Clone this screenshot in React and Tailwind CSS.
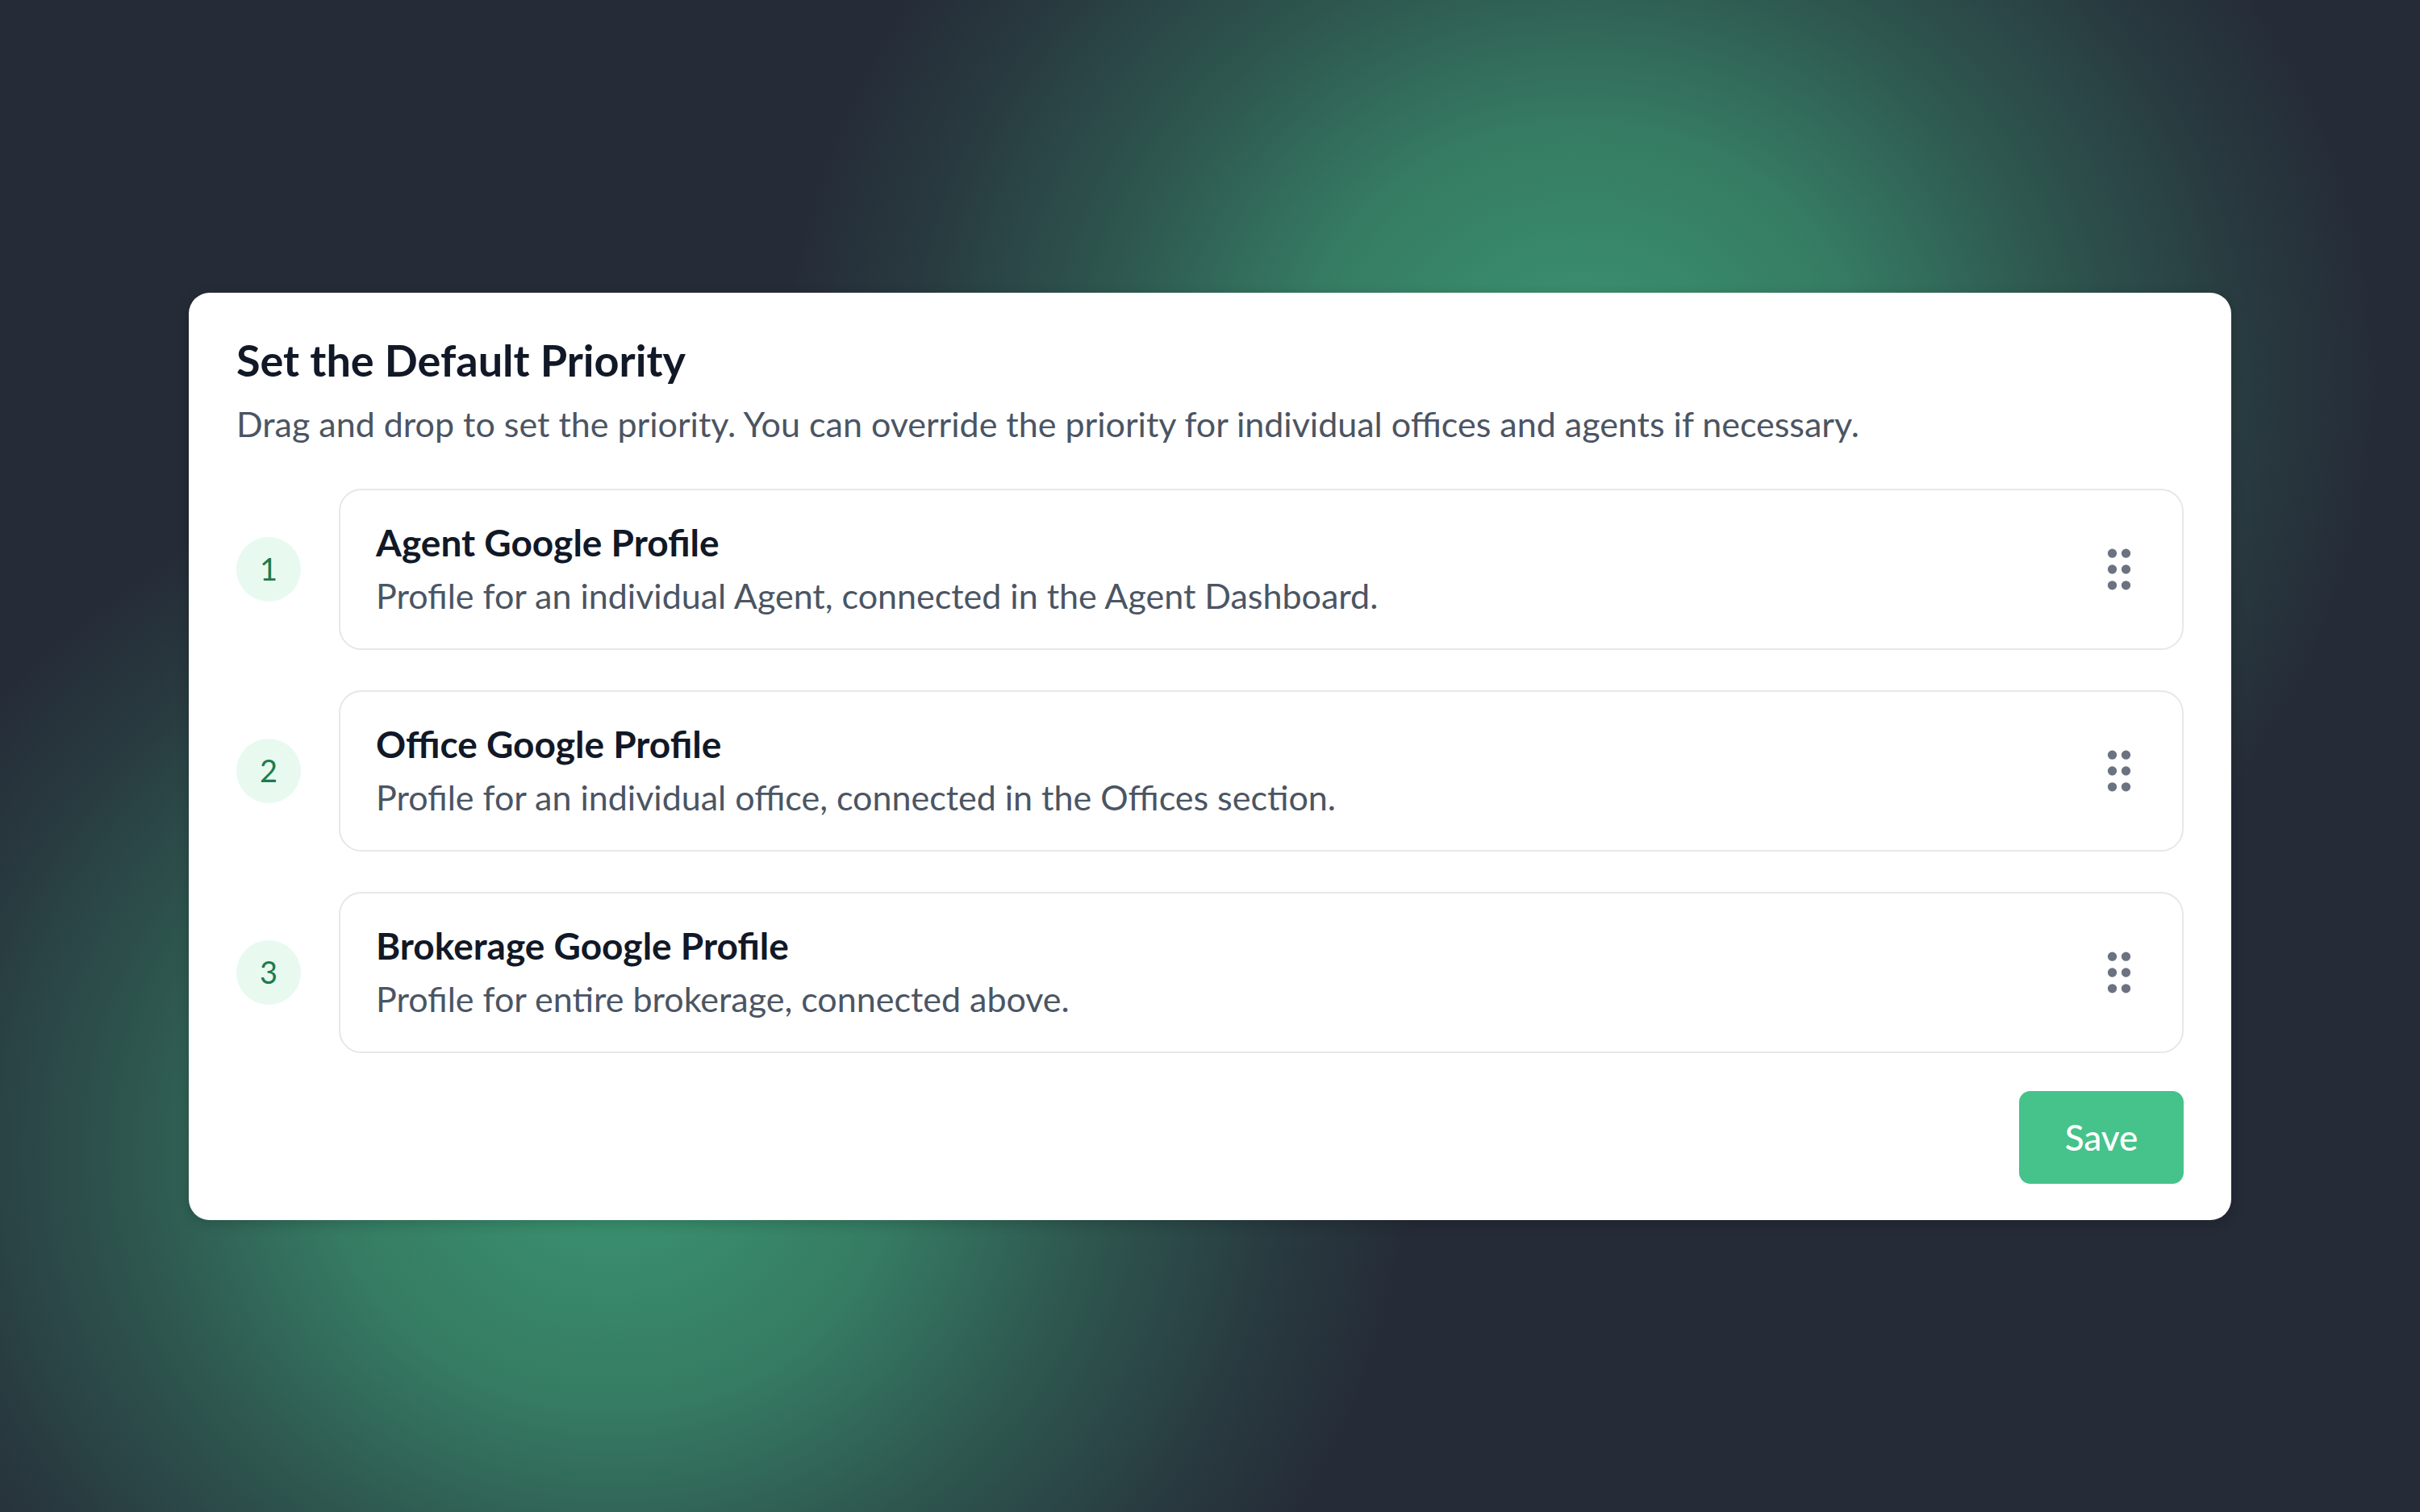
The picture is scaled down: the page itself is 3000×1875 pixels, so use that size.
import { GripVertical } from 'lucide-react'

const profiles = [
  { id: 1, title: 'Agent Google Profile', description: 'Profile for an individual Agent, connected in the Agent Dashboard.' },
  { id: 2, title: 'Office Google Profile', description: 'Profile for an individual office, connected in the Offices section.' },
  { id: 3, title: 'Brokerage Google Profile', description: 'Profile for entire brokerage, connected above.' },
]

export default function App() {
  return (
    <div className="min-h-screen w-full flex items-center justify-center bg-[#252b37] bg-[radial-gradient(ellipse_1000px_900px_at_1960px_470px,rgba(59,150,114,1)_0%,rgba(59,150,114,0.75)_35%,rgba(59,150,114,0.4)_60%,rgba(59,150,114,0.12)_85%,rgba(59,150,114,0)_100%),radial-gradient(ellipse_1000px_900px_at_760px_1430px,rgba(59,150,114,1)_0%,rgba(59,150,114,0.75)_35%,rgba(59,150,114,0.4)_60%,rgba(59,150,114,0.12)_85%,rgba(59,150,114,0)_100%)] [font-family:Lato,'Noto_Sans',sans-serif]">
      <div className="w-[2532px] bg-white rounded-[26px] pt-[52px] pb-[45px] pl-[59px] pr-[59px] shadow-[0_4px_16px_rgba(0,0,0,0.18)]">
        {/* Header */}
        <h1 className="text-[54px] leading-[64px] font-bold text-[#111827]">Set the Default Priority</h1>
        <p className="mt-[21px] text-[43px] leading-[52px] text-[#4b5563]">
          Drag and drop to set the priority. You can override the priority for individual offices and agents if necessary.
        </p>

        {/* Sortable list */}
        <div className="mt-[54px] flex flex-col gap-[50px]">
          {profiles.map((p) => (
            <div key={p.id} className="flex items-center gap-[47px]">
              <div className="w-[80px] h-[80px] shrink-0 rounded-full bg-[#e8faf0] flex items-center justify-center text-[38px] text-[#1f7a4e]">
                {p.id}
              </div>
              <div className="flex-1 h-[200px] border-2 border-[#e5e7eb] rounded-[28px] pl-[44px] pr-[44px] flex items-center justify-between">
                <div className="flex flex-col gap-[13px]">
                  <span className="text-[46px] leading-[54px] font-bold text-[#111827]">{p.title}</span>
                  <span className="text-[43px] leading-[52px] text-[#4b5563]">{p.description}</span>
                </div>
                <GripVertical size={68} strokeWidth={2} className="text-[#6b7280]" />
              </div>
            </div>
          ))}
        </div>

        {/* Actions */}
        <div className="mt-[47px] flex justify-end">
          <button className="w-[204px] h-[115px] rounded-[14px] bg-[#45c38a] text-white text-[44px] font-medium">
            Save
          </button>
        </div>
      </div>
    </div>
  )
}
